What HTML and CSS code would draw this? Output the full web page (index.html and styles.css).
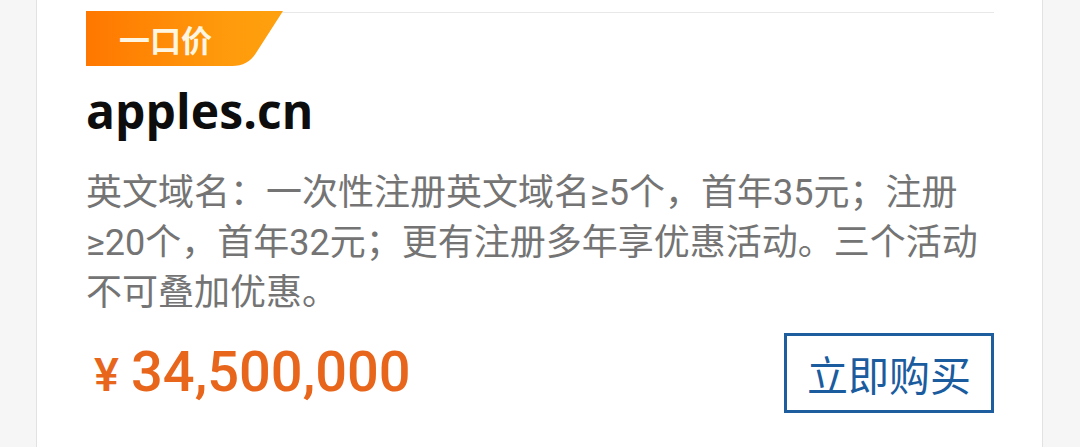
FILE: index.html
```html
<!DOCTYPE html>
<html lang="zh-CN">
<head>
<meta charset="utf-8">
<link rel="stylesheet" href="styles.css">
</head>
<body>
<div class="page">
  <div class="card">
    <div class="item">
      <div class="badge"><span>一口价</span></div>
      <h1 class="title">apples.cn</h1>
      <p class="desc">英文域名：一次性注册英文域名≥5个，首年35元；注册≥20个，首年32元；更有注册多年享优惠活动。三个活动不可叠加优惠。</p>
      <div class="bottom">
        <div class="price"><span class="yen">¥</span><span class="num">34,500,000</span></div>
        <button class="buy">立即购买</button>
      </div>
    </div>
  </div>
</div>
</body>
</html>
```
FILE: styles.css
```css
html, body {
  margin: 0;
  padding: 0;
  height: 100%;
  background: #f6f6f6;
  overflow: hidden;
}
.page {
  height: 100%;
  padding-left: 36px;
}
.card {
  width: 1007px;
  height: 100%;
  background: #ffffff;
  border-left: 1px solid #e2e2e2;
  border-right: 1px solid #e2e2e2;
  padding: 12px 48px 0 49px;
  box-sizing: border-box;
}
.item {
  border-top: 1px solid #e8e8e8;
  font-family: Roboto, "Noto Sans CJK SC", sans-serif;
}
.badge {
  margin-top: -2px;
  width: 197px;
  height: 55px;
  background: linear-gradient(90deg, #ff7700 0%, #ff9a0c 70%, #ffa10e 100%);
  clip-path: path("M0,0 H197 L170,42 Q162,55 146,55 H0 Z");
  display: flex;
  align-items: center;
}
.badge span {
  margin-left: 33px;
  font-family: "Noto Sans CJK SC", sans-serif;
  font-weight: 700;
  font-size: 31px;
  line-height: 1;
  color: #fff6e2;
}
.title {
  margin: 15px 0 0 0;
  font-family: "Open Sans", sans-serif;
  font-weight: 700;
  font-size: 48px;
  line-height: 60px;
  color: #0d0d0d;
  letter-spacing: 0.1px;
}
.desc {
  margin: 27px 0 0 0;
  font-size: 36px;
  line-height: 50px;
  color: #747474;
}
.bottom {
  margin-top: 15px;
  display: flex;
  justify-content: space-between;
  align-items: center;
}
.price {
  display: flex;
  align-items: baseline;
  color: #e8661c;
  padding-left: 8px;
}
.yen {
  font-size: 47px;
  font-weight: 500;
  margin-right: 12px;
}
.num {
  font-size: 56px;
  font-weight: 500;
  line-height: 1;
}
.buy {
  width: 210px;
  height: 80px;
  background: #ffffff;
  border: 3px solid #1f5e9e;
  color: #1b5c9f;
  font-family: "Noto Sans CJK SC", sans-serif;
  font-size: 41px;
  padding: 0;
  margin-right: 0;
}
```
